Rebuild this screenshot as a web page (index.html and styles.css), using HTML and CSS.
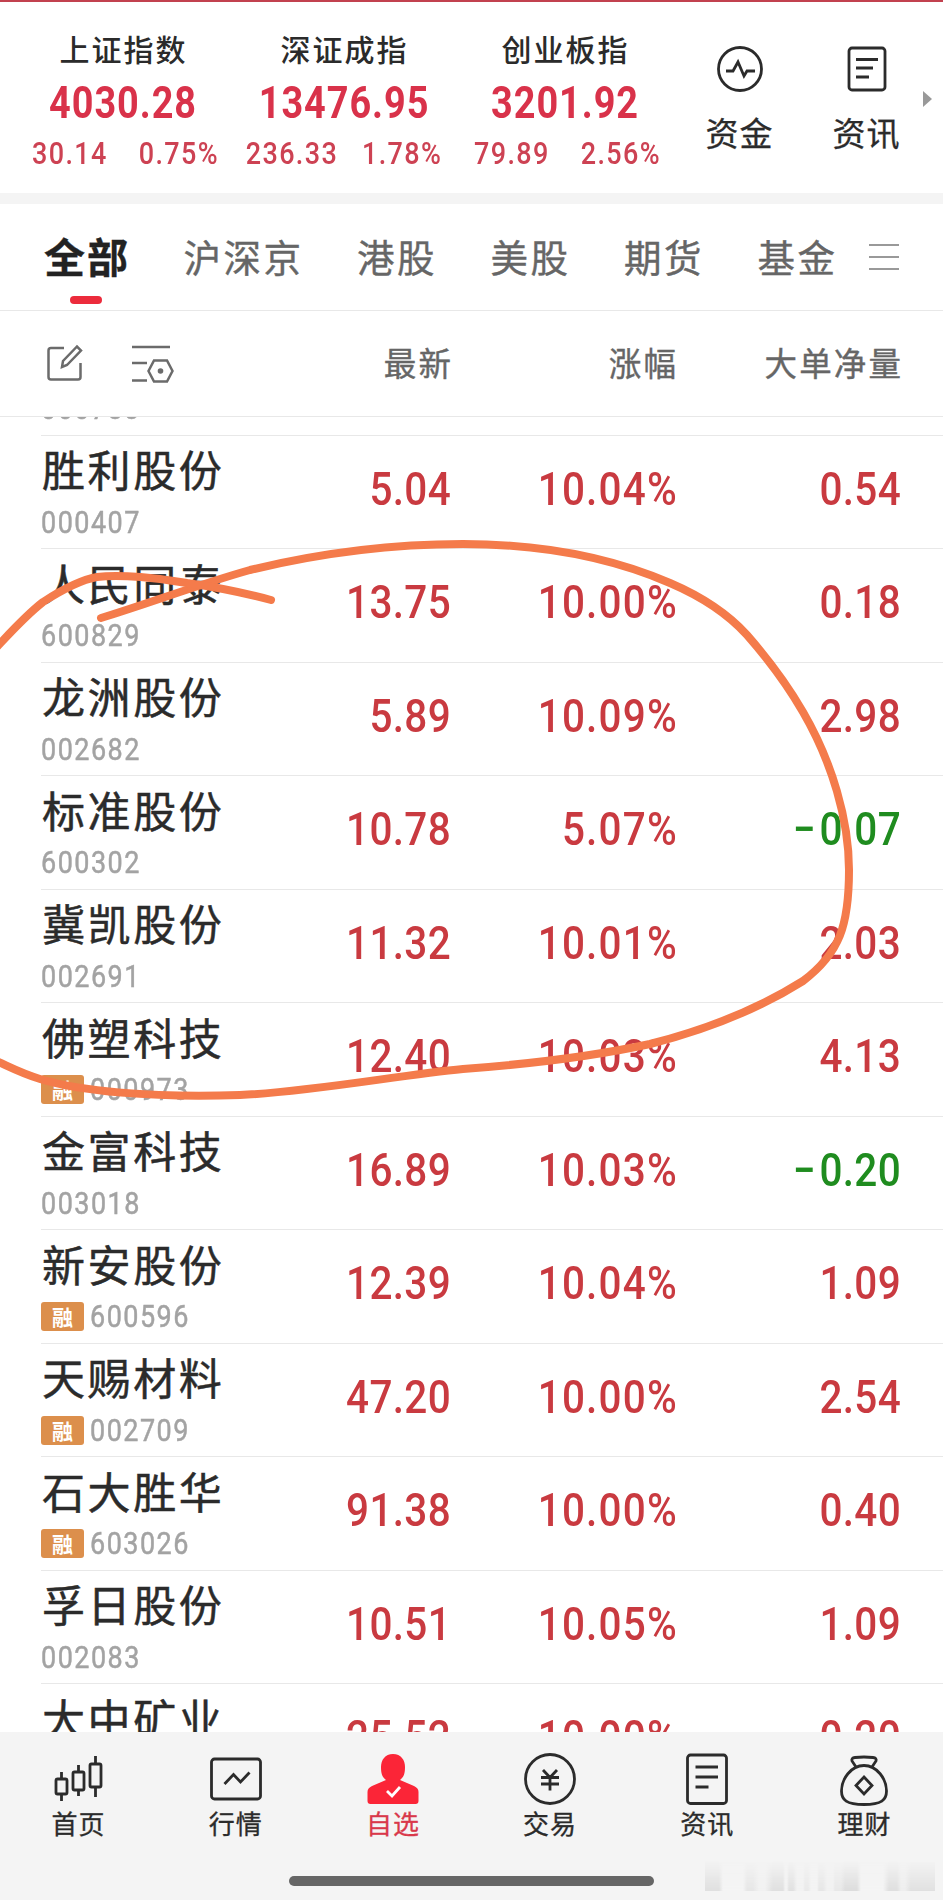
FILE: index.html
```html
<!DOCTYPE html>
<html lang="zh-CN">
<head>
  <meta charset="utf-8">
  <title>自选股</title>
  <link rel="stylesheet" href="styles.css">
</head>
<body>
  <div class="app">
    <header class="top">
      <div class="index">
        <p class="index-name">上证指数</p>
        <p class="index-value num">4030.28</p>
        <p class="index-change num"><span>30.14</span><span>0.75%</span></p>
      </div>
      <div class="index">
        <p class="index-name">深证成指</p>
        <p class="index-value num">13476.95</p>
        <p class="index-change wide num"><span>236.33</span><span>1.78%</span></p>
      </div>
      <div class="index">
        <p class="index-name">创业板指</p>
        <p class="index-value num">3201.92</p>
        <p class="index-change num"><span>79.89</span><span>2.56%</span></p>
      </div>
      <div class="shortcut">
        <svg width="46" height="46" viewBox="0 0 46 46"><circle cx="23" cy="23" r="21.5"/><path d="M9 25h7l5-9 6 14 3-5h8"/></svg>
        <p>资金</p>
      </div>
      <div class="shortcut">
        <svg width="46" height="46" viewBox="0 0 46 46"><rect x="5" y="2" width="36" height="42" rx="3"/><path d="M12 13.500h22M12 22h17M12 31h13"/></svg>
        <p>资讯</p>
      </div>
      <i class="more"></i>
    </header>

    <nav class="tabs">
      <span class="active">全部</span>
      <span>沪深京</span>
      <span>港股</span>
      <span>美股</span>
      <span>期货</span>
      <span>基金</span>
      <svg width="30" height="26" viewBox="0 0 30 26"><path d="M0 1h30M0 13h30M0 25h30"/></svg>
    </nav>

    <div class="row thead">
      <div class="tools">
        <svg width="36" height="38" viewBox="0 0 36 38"><path d="M17 3H4Q1.500 3 1.500 5.500V32Q1.500 34.500 4 34.500H31Q33.500 34.500 33.500 32V18M15 22l1-6L30 1.500l4 4L20 20z"/></svg>
        <svg width="42" height="38" viewBox="0 0 42 38"><path d="M0 2h38M0 18h15M0 35.500h15M22 15.500h13l5.500 10.500-5.500 10.500h-13l-5.500-10.500z"/><circle class="dot" cx="28.500" cy="26" r="2.800"/></svg>
      </div>
      <span>最新</span>
      <span>涨幅</span>
      <span>大单净量</span>
    </div>

    <main class="list">
      <div class="row">
        <div class="stock"><p class="name"></p><p class="code"><span class="num">000783</span></p></div>
      </div>
      <div class="row">
        <div class="stock"><p class="name">胜利股份</p><p class="code"><span class="num">000407</span></p></div>
        <span class="num">5.04</span><span class="num rate">10.04%</span><span class="num">0.54</span>
      </div>
      <div class="row">
        <div class="stock"><p class="name">人民同泰</p><p class="code"><span class="num">600829</span></p></div>
        <span class="num">13.75</span><span class="num rate">10.00%</span><span class="num">0.18</span>
      </div>
      <div class="row">
        <div class="stock"><p class="name">龙洲股份</p><p class="code"><span class="num">002682</span></p></div>
        <span class="num">5.89</span><span class="num rate">10.09%</span><span class="num">2.98</span>
      </div>
      <div class="row">
        <div class="stock"><p class="name">标准股份</p><p class="code"><span class="num">600302</span></p></div>
        <span class="num">10.78</span><span class="num rate">5.07%</span><span class="num down"><em>−</em>0.07</span>
      </div>
      <div class="row">
        <div class="stock"><p class="name">冀凯股份</p><p class="code"><span class="num">002691</span></p></div>
        <span class="num">11.32</span><span class="num rate">10.01%</span><span class="num">2.03</span>
      </div>
      <div class="row">
        <div class="stock"><p class="name">佛塑科技</p><p class="code"><b class="tag">融</b><span class="num">000973</span></p></div>
        <span class="num">12.40</span><span class="num rate">10.03%</span><span class="num">4.13</span>
      </div>
      <div class="row">
        <div class="stock"><p class="name">金富科技</p><p class="code"><span class="num">003018</span></p></div>
        <span class="num">16.89</span><span class="num rate">10.03%</span><span class="num down"><em>−</em>0.20</span>
      </div>
      <div class="row">
        <div class="stock"><p class="name">新安股份</p><p class="code"><b class="tag">融</b><span class="num">600596</span></p></div>
        <span class="num">12.39</span><span class="num rate">10.04%</span><span class="num">1.09</span>
      </div>
      <div class="row">
        <div class="stock"><p class="name">天赐材料</p><p class="code"><b class="tag">融</b><span class="num">002709</span></p></div>
        <span class="num">47.20</span><span class="num rate">10.00%</span><span class="num">2.54</span>
      </div>
      <div class="row">
        <div class="stock"><p class="name">石大胜华</p><p class="code"><b class="tag">融</b><span class="num">603026</span></p></div>
        <span class="num">91.38</span><span class="num rate">10.00%</span><span class="num">0.40</span>
      </div>
      <div class="row">
        <div class="stock"><p class="name">孚日股份</p><p class="code"><span class="num">002083</span></p></div>
        <span class="num">10.51</span><span class="num rate">10.05%</span><span class="num">1.09</span>
      </div>
      <div class="row">
        <div class="stock"><p class="name">大中矿业</p><p class="code"></p></div>
        <span class="num">25.52</span><span class="num rate">10.00%</span><span class="num">0.20</span>
      </div>
    </main>

    <footer class="bottom">
      <nav class="menu">
        <a>
          <svg width="52" height="52" viewBox="0 0 52 52"><path d="M8.500 19v7M8.500 41v7M25.500 12v7M25.500 37v6M42.500 3v8M42.500 34v10"/><rect x="3" y="26" width="11" height="15" rx="1.500"/><rect x="20" y="19" width="11" height="18" rx="1.500"/><rect x="37" y="11" width="11" height="23" rx="1.500"/></svg>
          首页
        </a>
        <a>
          <svg width="52" height="52" viewBox="0 0 52 52"><rect x="1.500" y="6" width="49" height="40" rx="3"/><path d="M14.500 31l9-9.500 7 7.500 9-9.500"/></svg>
          行情
        </a>
        <a class="on">
          <svg width="52" height="52" viewBox="0 0 52 52"><path class="man" d="M26 1c8 0 12 6 12 13 0 6-1 10-5 13l14 6c3 1.500 4.500 3 4.500 6v9c0 2-1 3-3 3h-45c-2 0-3-1-3-3v-9c0-3 1.500-4.500 4.500-6l14-6c-4-3-5-7-5-13C14 7 18 1 26 1z"/><path class="tick" d="M20 38l5 5 8-9"/></svg>
          自选
        </a>
        <a>
          <svg width="52" height="52" viewBox="0 0 52 52"><circle cx="26" cy="26" r="24.500"/><path d="M19 17l7 7.500 7-7.500M17 24.500h18M17 31h18M26 24.500v13"/></svg>
          交易
        </a>
        <a>
          <svg width="52" height="52" viewBox="0 0 52 52"><rect x="6.500" y="2" width="39" height="48.500" rx="3"/><path d="M14.500 14h22.500M14.500 24h22.500M14.500 34h13"/></svg>
          资讯
        </a>
        <a>
          <svg width="52" height="52" viewBox="0 0 52 52"><path d="M18 14l-4-6q-1-3 3-3.500 9-1 18 0 4 .5 3 3.500l-4 6"/><path d="M26 12.500C13 12.500 3.500 26 3.500 38c0 9 5 13.500 22.500 13.500s22.500-4.500 22.500-13.500C48.500 26 39 12.500 26 12.500z"/><path d="M26 24l8 8.500-8 8.500-8-8.500z"/></svg>
          理财
        </a>
      </nav>
      <i class="home-bar"></i>
      <i class="mosaic"></i>
    </footer>

    <!-- 手绘圈 -->
    <svg class="mark" width="943" height="1900" viewBox="0 0 943 1900">
      <path d="M101 618C150 603 200 584 250 570C320 553 395 544 463 544C540 544 610 557 670 583C705 598 728 614 747 635C768 659 788 686 803 712C832 762 849 820 849 870C849 925 840 953 803 981C760 1008 705 1030 650 1044C590 1057 530 1064 463 1069C400 1075 310 1092 240 1095C150 1098 80 1091 40 1079C20 1073 8 1066 -6 1060"/>
      <path d="M-6 650C10 633 25 616 43 602C60 591 80 580 97 577C120 574 160 578 187 583C215 587 245 593 271 600"/>
    </svg>
  </div>
</body>
</html>
```
FILE: styles.css
```css
*{
  box-sizing: border-box;
}
body{
  margin: 0;
  background: #fff;
  font-family: "Noto Sans CJK SC", sans-serif;
  color: #2b2b2b;
}
p{
  margin: 0;
}
i{
  display: block;
}
svg{
  fill: none;
  stroke: #2b2b2b;
  stroke-width: 2.8;
  display: block;
  overflow: visible;
}
.app{
  position: relative;
  width: 943px;
  height: 1900px;
  overflow: hidden;
  display: flex;
  flex-direction: column;
}
/* 窄体数字 */
.num{
  font-family: Roboto, "Liberation Sans", sans-serif;
  letter-spacing: 1.7px;
  transform: scaleX(.87);
}

/* 指数 */
.top{
  height: 204px;
  border-top: 2px solid #c2414f;
  border-bottom: 11px solid #f4f4f4;
  padding-left: 13px;
  display: flex;
}
.index{
  width: 221px;
  padding-top: 23px;
  display: flex;
  flex-direction: column;
  align-items: center;
  color: #d9324a;
}
.index-name{
  font-size: 30px;
  line-height: 46px;
  letter-spacing: 2px;
  font-weight: 500;
  color: #2b2b2b;
}
.index-value{
  margin-top: 5px;
  font-size: 43.500px;
  line-height: 56px;
  font-weight: 700;
  letter-spacing: 1.1px;
}
.index-change{
  width: 215px;
  display: flex;
  justify-content: space-between;
  font-size: 31px;
  line-height: 44px;
  letter-spacing: 1.6px;
  font-weight: 500;
  color: #cd4253;
  position: relative;
  left: 2px;
}
.index-change.wide{
  width: 226px;
  left: -1px;
}
.shortcut{
  width: 127px;
  padding-top: 44px;
  display: flex;
  flex-direction: column;
  align-items: center;
  font-size: 33px;
  line-height: 48px;
  letter-spacing: 1px;
  -webkit-text-stroke: .3px;
}
.shortcut p{
  margin-top: 16px;
}
.more{
  margin: 89px 0 0 -7px;
  width: 0;
  height: 0;
  border-left: 9px solid #999;
  border-top: 8px solid transparent;
  border-bottom: 8px solid transparent;
}

/* 分类 */
.tabs{
  height: 107px;
  border-bottom: 1px solid #e8e8e8;
  padding: 0 44px;
  display: flex;
  align-items: center;
  gap: 53.500px;
  font-size: 37.500px;
  letter-spacing: 2.500px;
  color: #666;
  white-space: nowrap;
  -webkit-text-stroke: .4px;
}
.tabs span{
  margin-top: -4px;
}
.tabs .active{
  position: relative;
  font-size: 41px;
  letter-spacing: 2px;
  font-weight: 700;
  color: #222;
}
.tabs .active::after{
  content: "";
  position: absolute;
  left: 26px;
  bottom: -19px;
  width: 32px;
  height: 8px;
  border-radius: 4px;
  background: #ec2b3c;
}
.tabs svg{
  margin-left: -22px;
  stroke: #999;
  stroke-width: 2;
}

/* 列表 */
.row{
  display: grid;
  grid-template-columns: 260px 149px 225px 225px;
  align-items: center;
  height: 113.500px;
  margin-left: 41px;
  border-bottom: 1px solid #e8e8e8;
}
.row > span{
  text-align: right;
}
.thead{
  height: 106px;
  margin: 0;
  padding-left: 41px;
  font-size: 32.500px;
  letter-spacing: 2.100px;
  color: #666;
  -webkit-text-stroke: .4px;
}
.thead span{
  margin: -4px -3px 0 0;
}
.tools{
  display: flex;
  gap: 49px;
  padding-left: 6px;
}
.tools svg{
  stroke: #6b6b6b;
  stroke-width: 2.500;
}
.tools .dot{
  fill: #6b6b6b;
  stroke: none;
}
.list{
  height: 1315px;
  overflow: hidden;
}
/* 已滚动，首行只露出底边 */
.list .row:first-child{
  margin-top: -95px;
}
.list .row > .num{
  font-size: 46.500px;
  font-weight: 500;
  color: #c93a40;
  letter-spacing: .4px;
  transform-origin: right center;
  margin-right: -1px;
  padding-bottom: 6px;
}
.list .row > .rate{
  letter-spacing: 1.400px;
  margin-right: -3px;
}
.list .row > .down{
  color: #1f8c1f;
}
.down em{
  font-style: normal;
  margin-right: 4px;
}
.name{
  height: 60px;
  font-size: 43px;
  line-height: 60px;
  letter-spacing: 2.600px;
  padding-left: 1px;
  margin-top: -2px;
  -webkit-text-stroke: .5px;
}
.code{
  display: flex;
  align-items: center;
  height: 42px;
  margin-top: 3px;
  font-size: 31px;
  color: #a3a3a3;
  -webkit-text-stroke: .5px;
}
.code .num{
  transform-origin: left center;
}
.tag{
  width: 43px;
  height: 29px;
  margin-right: 6px;
  border-radius: 3px;
  background: #dc8f4c;
  color: #fff;
  font-size: 21px;
  line-height: 28px;
  text-align: center;
  -webkit-text-stroke: 0;
}

/* 底部 */
.bottom{
  position: relative;
  height: 168px;
  background: #f4f4f4;
}
.menu{
  display: flex;
  padding-top: 21px;
}
.menu a{
  flex: 1;
  display: flex;
  flex-direction: column;
  align-items: center;
  font-size: 26px;
  line-height: 36px;
  letter-spacing: 1px;
  -webkit-text-stroke: .3px;
}
.menu .on{
  color: #d9384a;
}
.man{
  fill: #fb2537;
  stroke: none;
}
.tick{
  stroke: #fff;
}
.home-bar{
  width: 365px;
  height: 10px;
  margin: 35px auto 0;
  border-radius: 5px;
  background: #666;
}
.mosaic{
  position: absolute;
  right: 8px;
  bottom: 9px;
  width: 230px;
  height: 30px;
  background: linear-gradient(90deg, #dfdfdf 0 14px, #f4f4f4 18px 38px, #e6e6e6 42px 48px, #f1f1f1 54px 60px, #dfdfdf 68px 78px, #f2f2f2 80px 82px, #e0e0e0 84px 88px, #f2f2f2 92px 98px, #e9e9e9 100px 103px, #f3f3f3 106px 112px, #e6e6e6 114px 118px, #f1f1f1 122px 128px, #e8e8e8 130px 136px, #dcdcdc 140px 152px, #f4f4f4 156px 178px, #dedede 184px 192px, #eee 196px 200px, #e0e0e0 206px 230px);
  -webkit-mask-image: linear-gradient(transparent, #000);
  mask-image: linear-gradient(transparent, #000);
}
.mark{
  position: absolute;
  left: 0;
  top: 0;
  stroke: #f47b4b;
  stroke-width: 8;
  stroke-linecap: round;
}
```
